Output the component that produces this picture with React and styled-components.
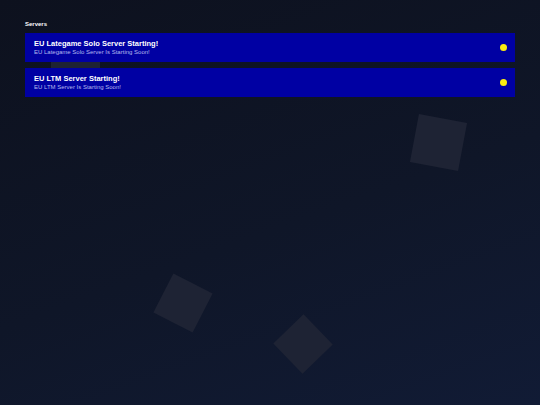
import React from "react";
import styled, { createGlobalStyle } from "styled-components";

const GlobalStyle = createGlobalStyle`
  * {
    box-sizing: border-box;
  }

  html,
  body {
    margin: 0;
    padding: 0;
    height: 100%;
  }

  body {
    font-family: "Liberation Sans", Arial, sans-serif;
    background: #0e1220;
  }
`;

const Page = styled.div`
  position: relative;
  width: 100%;
  min-height: 100vh;
  overflow: hidden;
  background: linear-gradient(160deg, #0d111e 0%, #0f1628 55%, #111b35 100%);
`;

const Backdrop = styled.div`
  position: absolute;
  inset: 0;
  pointer-events: none;
  z-index: 0;
`;

const Square = styled.div`
  position: absolute;
  left: ${(props) => props.x - props.size / 2}px;
  top: ${(props) => props.y - props.size / 2}px;
  width: ${(props) => props.size}px;
  height: ${(props) => props.size}px;
  background: #1e2334;
  transform: rotate(${(props) => props.angle}deg);
`;

const Content = styled.main`
  position: relative;
  z-index: 1;
  padding: 21px 25px 25px;
`;

const SectionLabel = styled.h2`
  margin: 0 0 5px;
  font-size: 6px;
  line-height: 7px;
  font-weight: 700;
  color: #ffffff;
`;

const ServerList = styled.ul`
  list-style: none;
  margin: 0;
  padding: 0;
  display: flex;
  flex-direction: column;
  gap: 6px;
`;

const ServerItem = styled.li`
  display: flex;
  align-items: center;
  height: 29px;
  padding: 0 8px 0 9px;
  background: #0000a3;
`;

const ServerMeta = styled.div`
  flex: 1;
  display: flex;
  flex-direction: column;
  gap: 1px;
`;

const ServerTitle = styled.h3`
  margin: 0;
  font-size: 7.5px;
  line-height: 9px;
  font-weight: 700;
  color: #ffffff;
`;

const ServerNote = styled.p`
  margin: 0;
  font-size: 6px;
  line-height: 7px;
  color: #b4b8ee;
`;

const StatusDot = styled.span`
  width: 7px;
  height: 7px;
  border-radius: 50%;
  background: ${(props) => props.color};
`;

const servers = [
  {
    id: "eu-lategame-solo",
    title: "EU Lategame Solo Server Starting!",
    note: "EU Lategame Solo Server Is Starting Soon!",
    status: "#fbec10",
  },
  {
    id: "eu-ltm",
    title: "EU LTM Server Starting!",
    note: "EU LTM Server Is Starting Soon!",
    status: "#fbec10",
  },
];

const shapes = [
  { x: 75.5, y: 58.5, size: 49, angle: 0 },
  { x: 438, y: 142, size: 49, angle: 10.6 },
  { x: 183, y: 303, size: 44, angle: 27 },
  { x: 302.5, y: 343.5, size: 42, angle: 46 },
];

const App = () => (
  <>
    <GlobalStyle />
    <Page>
      <Backdrop>
        {shapes.map((s, i) => (
          <Square key={i} x={s.x} y={s.y} size={s.size} angle={s.angle} />
        ))}
      </Backdrop>
      <Content>
        <SectionLabel>Servers</SectionLabel>
        <ServerList>
          {servers.map((server) => (
            <ServerItem key={server.id}>
              <ServerMeta>
                <ServerTitle>{server.title}</ServerTitle>
                <ServerNote>{server.note}</ServerNote>
              </ServerMeta>
              <StatusDot color={server.status} />
            </ServerItem>
          ))}
        </ServerList>
      </Content>
    </Page>
  </>
);

export default App;
